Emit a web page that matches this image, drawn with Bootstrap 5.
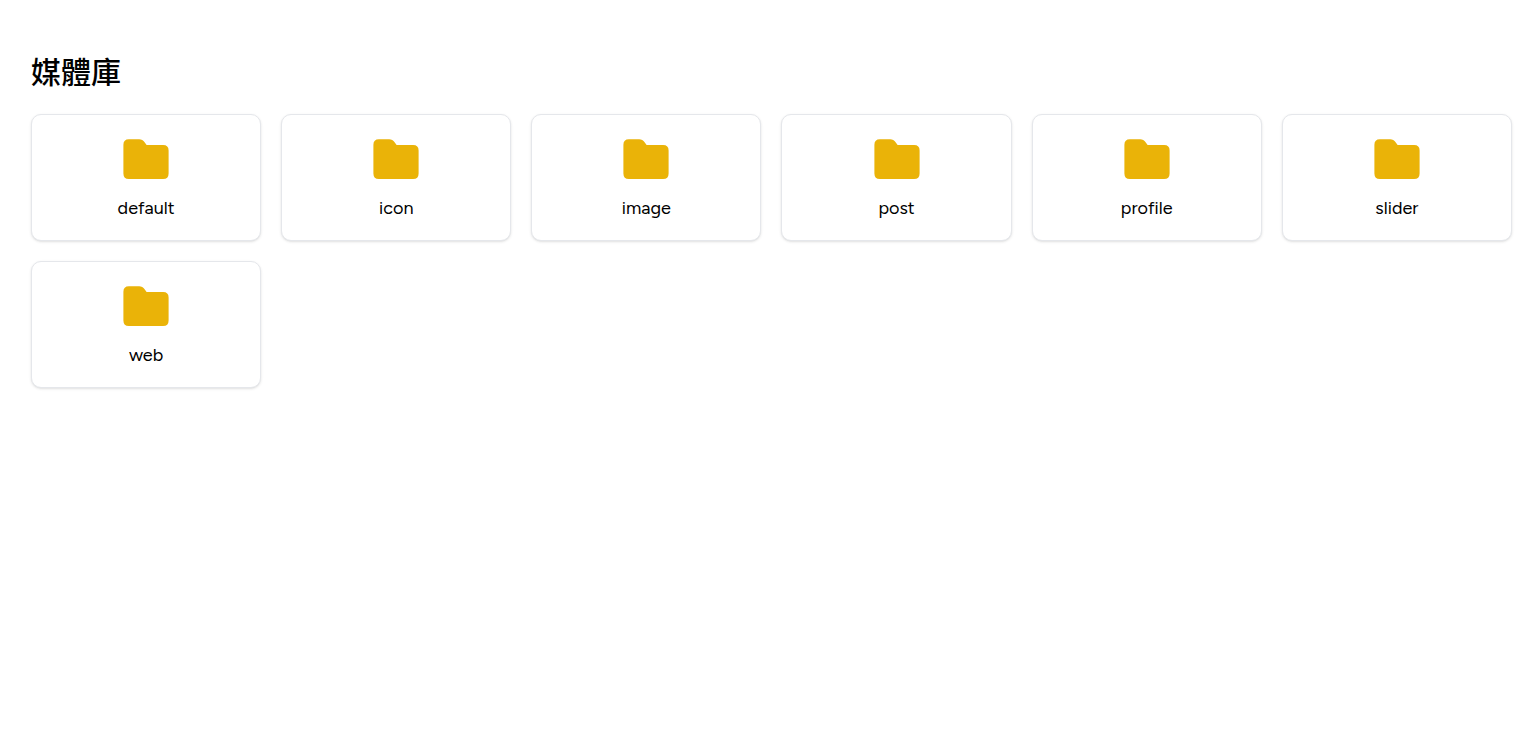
<!DOCTYPE html>
<html lang="zh-Hant">
<head>
<meta charset="utf-8">
<meta name="viewport" content="width=device-width, initial-scale=1">
<title>媒體庫</title>
<link rel="stylesheet" href="https://cdn.jsdelivr.net/npm/bootstrap@5.3.0/dist/css/bootstrap.min.css">
<style>
body { font-family: Figtree, Lato, "Noto Sans CJK TC", sans-serif; background: #fff; color: #000; }
.library { padding: 53px 21px 32px 31px; }
.library-title { font-size: 30px; line-height: 40px; font-weight: 500; margin-bottom: 21px; }
.library-grid { --bs-gutter-x: 20px; --bs-gutter-y: 20px; }
.folder-card { border: 1px solid #e5e7eb; border-radius: 10px; color: #000; padding: 17px 16px; box-shadow: 0 1px 3px rgba(0,0,0,.1), 0 1px 2px -1px rgba(0,0,0,.1); }
.folder-icon { width: 56px; height: 56px; fill: #eab308; }
.folder-name { font-size: 18px; line-height: 29px; margin-top: 6px; }
</style>
</head>
<body>
<svg class="d-none" aria-hidden="true"><symbol id="folder" viewBox="0 0 56 56"><path d="M10.900 7.300h10.200q3.500 0 5.500 3l2 2.700H45.100q5.500 0 5.500 5.500v23q0 5.500-5.500 5.500H10.900q-5.500 0-5.500-5.500v-28.700Q5.400 7.300 10.900 7.300z"/></symbol></svg>
<main class="container-fluid library">
<h1 class="library-title">媒體庫</h1>
<div class="row row-cols-2 row-cols-md-4 row-cols-lg-6 library-grid">
<div class="col"><a href="#default" class="card folder-card align-items-center text-decoration-none"><svg class="folder-icon" aria-hidden="true"><use href="#folder"/></svg><span class="folder-name">default</span></a></div>
<div class="col"><a href="#icon" class="card folder-card align-items-center text-decoration-none"><svg class="folder-icon" aria-hidden="true"><use href="#folder"/></svg><span class="folder-name">icon</span></a></div>
<div class="col"><a href="#image" class="card folder-card align-items-center text-decoration-none"><svg class="folder-icon" aria-hidden="true"><use href="#folder"/></svg><span class="folder-name">image</span></a></div>
<div class="col"><a href="#post" class="card folder-card align-items-center text-decoration-none"><svg class="folder-icon" aria-hidden="true"><use href="#folder"/></svg><span class="folder-name">post</span></a></div>
<div class="col"><a href="#profile" class="card folder-card align-items-center text-decoration-none"><svg class="folder-icon" aria-hidden="true"><use href="#folder"/></svg><span class="folder-name">profile</span></a></div>
<div class="col"><a href="#slider" class="card folder-card align-items-center text-decoration-none"><svg class="folder-icon" aria-hidden="true"><use href="#folder"/></svg><span class="folder-name">slider</span></a></div>
<div class="col"><a href="#web" class="card folder-card align-items-center text-decoration-none"><svg class="folder-icon" aria-hidden="true"><use href="#folder"/></svg><span class="folder-name">web</span></a></div>
</div>
</main>
<script src="https://cdn.jsdelivr.net/npm/bootstrap@5.3.0/dist/js/bootstrap.bundle.min.js"></script>
</body>
</html>
